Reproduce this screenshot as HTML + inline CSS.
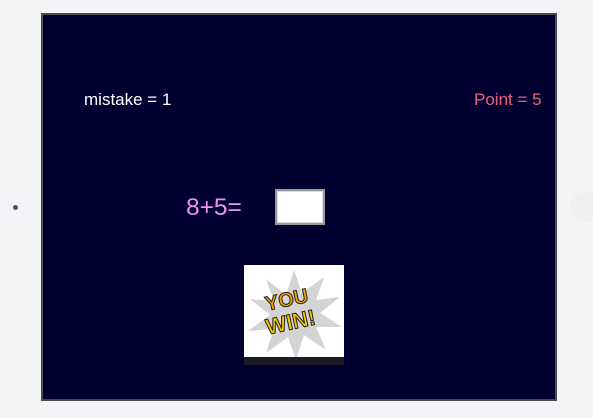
<!DOCTYPE html>
<html><head><style>
body{margin:0;width:593px;height:418px;background:#f3f4f6;position:relative;overflow:hidden;font-family:"Liberation Sans",sans-serif}
.f{position:absolute;left:41px;top:13px;width:512px;height:384px;background:#000030;border:2px solid #4a4a4e}
.t{position:absolute;font-size:17px}
</style></head><body>
<div style="position:absolute;left:13px;top:205px;width:5px;height:5px;border-radius:50%;background:#4a5060"></div>
<div style="position:absolute;left:570px;top:192px;width:34px;height:30px;border-radius:50%;background:#eef0f2"></div>
<div class="f"></div>
<div class="t" style="left:84px;top:90px;color:#fff">mistake = 1</div>
<div class="t" style="left:474px;top:90px;color:#f06080">Point = 5</div>
<div style="position:absolute;left:186px;top:194px;font-size:24.5px;color:#f090f0">8+5=</div>
<div style="position:absolute;left:275px;top:189px;width:46px;height:32px;background:#fff;border:2px solid #999;box-shadow:inset 0 0 0 1px #ddd"></div>
<div style="position:absolute;left:244px;top:265px;width:100px;height:100px;background:#fff;overflow:hidden">
<svg width="100" height="100" viewBox="0 0 100 100">
<polygon points="50,5 58,28 80,12 72,35 96,32 76,48 98,62 72,62 82,85 60,70 52,95 44,72 22,88 30,64 4,66 26,50 6,34 30,36 22,14 42,30" fill="#d4d4d4"/>
<text x="22" y="42" font-family="Liberation Sans" font-weight="bold" font-size="20" fill="#f5a000" stroke="#222" stroke-width="1" transform="rotate(-12 40 40)">YOU</text>
<text x="22" y="66" font-family="Liberation Sans" font-weight="bold" font-size="22" fill="#f5c800" stroke="#222" stroke-width="1" transform="rotate(-12 40 60)">WIN!</text>
<rect x="0" y="92" width="100" height="8" fill="#1a1a24"/>
</svg></div>
</body></html>
